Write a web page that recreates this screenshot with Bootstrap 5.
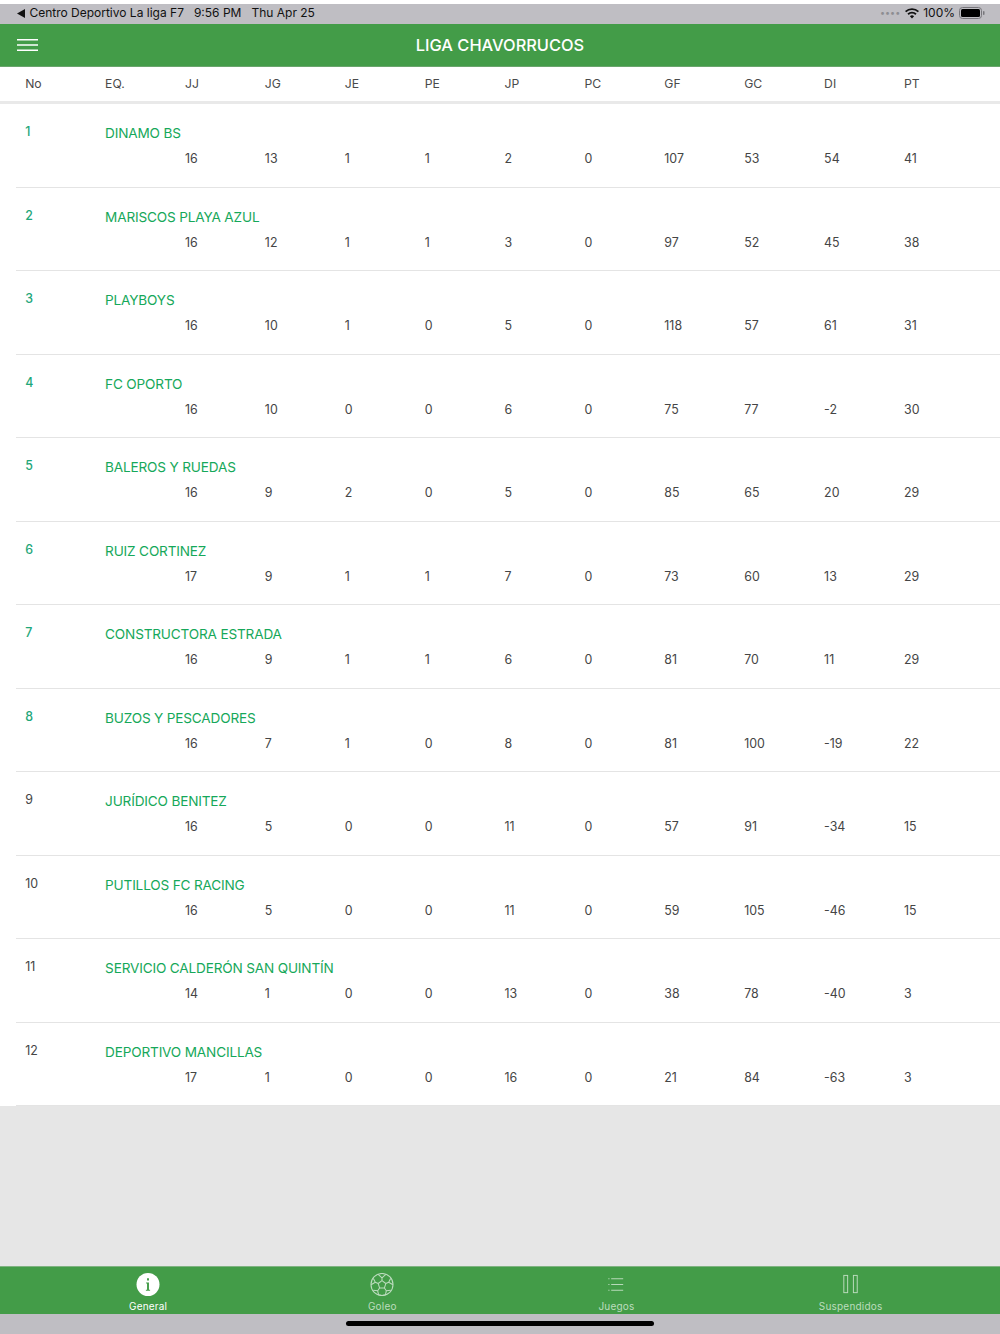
<!DOCTYPE html>
<html lang="es">
<head>
<meta charset="utf-8">
<title>Liga Chavorrucos</title>
<link href="https://cdn.jsdelivr.net/npm/bootstrap@5.3.0/dist/css/bootstrap.min.css" rel="stylesheet">
<style>
html,body{height:1334px;overflow:hidden}
body{font-family:Inter,"Liberation Sans",sans-serif;background:#e6e6e6;color:#444}
.shell{height:1334px}
.statusbar{height:24px;padding:0 15px 2px 17px;background:#bfbec3;color:#111;font-size:12px;line-height:16px;border-top:4px solid #fff;box-sizing:border-box}
.statusbar .gap-s{gap:10px}
.sig{color:#8d8d92;font-size:9px;margin-right:5px}
.appbar{height:43px;background:#439c48;color:#fff;font-size:16.4px;font-weight:500;border-bottom:1px solid #6aa56d}
.burger{position:absolute;left:17px;top:15px;width:21px;height:12px}
.headrow{height:37px;background:#fff;border-bottom:3px solid #e9e9e9;padding-left:25.2px;font-size:12.2px;color:#4a4a4a}
.cols{display:grid;grid-template-columns:repeat(12,79.9px)}
.listing{background:#fff}
.entry{height:83.5px;margin-left:16px;padding:20px 0 0 9.2px;border-bottom:1px solid #e4e4e4;font-size:12.4px;color:#454545;grid-template-rows:18px 18px;row-gap:8.4px;line-height:18px;box-sizing:border-box}
.rank{margin-top:-1px}
.rank.top{color:#1fa77a;font-weight:500}
.teamname{grid-column:2/13;color:#16a85a;font-size:13.6px;letter-spacing:-.17px}
.gapcell{grid-column:1/3}
.filler{flex:1;background:#e6e6e6}
.tabs{height:48px;background:#439c48;border-top:1px solid #7fb381;color:#bcdcbe;font-size:10px;letter-spacing:.2px}
.tabitem{width:234.2px;height:47px}
.tabitem svg{display:block;margin-top:6px;margin-bottom:3px}
.tabitem.active{color:#fff}
.tabstrip{padding-left:31px}
.homebar{height:20px;background:#bfbec3}
.homeind{width:308px;height:5px;border-radius:3px;background:#000;margin-top:7px}
</style>
</head>
<body>
<div class="shell d-flex flex-column">
  <div class="statusbar d-flex justify-content-between align-items-center">
    <div class="d-flex align-items-center gap-s">
      <span><svg width="9" height="9" viewBox="0 0 9 9"><path d="M0 4.5 8 0v9z" fill="#111"/></svg> Centro Deportivo La liga F7</span>
      <span>9:56 PM</span>
      <span>Thu Apr 25</span>
    </div>
    <div class="d-flex align-items-center">
      <span class="sig">••••</span>
      <svg class="me-1" width="14" height="11" viewBox="0 0 14 11"><path d="M7 10.5 4.9 8.2a3 3 0 0 1 4.2 0zM3.7 6.9 2.4 5.5a6.6 6.6 0 0 1 9.2 0l-1.3 1.4a4.7 4.7 0 0 0-6.6 0zM1.2 4.3 0 3a10 10 0 0 1 14 0l-1.2 1.3a8.3 8.3 0 0 0-11.6 0z" fill="#111"/></svg>
      <span class="me-1">100%</span>
      <svg width="26" height="12" viewBox="0 0 26 12"><rect x=".5" y=".5" width="22" height="11" rx="3" fill="none" stroke="#77767b"/><rect x="2" y="2" width="19" height="8" rx="1.5" fill="#000"/><rect x="24" y="4" width="1.5" height="4" rx=".7" fill="#77767b"/></svg>
    </div>
  </div>
  <div class="appbar position-relative d-flex align-items-center justify-content-center">
    <svg class="burger" viewBox="0 0 21 12"><path d="M0 .75h21M0 6h21M0 11.25h21" stroke="#fff" stroke-width="1.4"/></svg>
    <span>LIGA CHAVORRUCOS</span>
  </div>
  <div class="headrow cols align-items-center">
    <span>No</span><span>EQ.</span><span>JJ</span><span>JG</span><span>JE</span><span>PE</span><span>JP</span><span>PC</span><span>GF</span><span>GC</span><span>DI</span><span>PT</span>
  </div>
  <div class="listing">
    <div class="entry cols"><span class="rank top">1</span><span class="teamname">DINAMO BS</span><span class="gapcell"></span><span>16</span><span>13</span><span>1</span><span>1</span><span>2</span><span>0</span><span>107</span><span>53</span><span>54</span><span>41</span></div>
    <div class="entry cols"><span class="rank top">2</span><span class="teamname">MARISCOS PLAYA AZUL</span><span class="gapcell"></span><span>16</span><span>12</span><span>1</span><span>1</span><span>3</span><span>0</span><span>97</span><span>52</span><span>45</span><span>38</span></div>
    <div class="entry cols"><span class="rank top">3</span><span class="teamname">PLAYBOYS</span><span class="gapcell"></span><span>16</span><span>10</span><span>1</span><span>0</span><span>5</span><span>0</span><span>118</span><span>57</span><span>61</span><span>31</span></div>
    <div class="entry cols"><span class="rank top">4</span><span class="teamname">FC OPORTO</span><span class="gapcell"></span><span>16</span><span>10</span><span>0</span><span>0</span><span>6</span><span>0</span><span>75</span><span>77</span><span>-2</span><span>30</span></div>
    <div class="entry cols"><span class="rank top">5</span><span class="teamname">BALEROS Y RUEDAS</span><span class="gapcell"></span><span>16</span><span>9</span><span>2</span><span>0</span><span>5</span><span>0</span><span>85</span><span>65</span><span>20</span><span>29</span></div>
    <div class="entry cols"><span class="rank top">6</span><span class="teamname">RUIZ CORTINEZ</span><span class="gapcell"></span><span>17</span><span>9</span><span>1</span><span>1</span><span>7</span><span>0</span><span>73</span><span>60</span><span>13</span><span>29</span></div>
    <div class="entry cols"><span class="rank top">7</span><span class="teamname">CONSTRUCTORA ESTRADA</span><span class="gapcell"></span><span>16</span><span>9</span><span>1</span><span>1</span><span>6</span><span>0</span><span>81</span><span>70</span><span>11</span><span>29</span></div>
    <div class="entry cols"><span class="rank top">8</span><span class="teamname">BUZOS Y PESCADORES</span><span class="gapcell"></span><span>16</span><span>7</span><span>1</span><span>0</span><span>8</span><span>0</span><span>81</span><span>100</span><span>-19</span><span>22</span></div>
    <div class="entry cols"><span class="rank">9</span><span class="teamname">JURÍDICO BENITEZ</span><span class="gapcell"></span><span>16</span><span>5</span><span>0</span><span>0</span><span>11</span><span>0</span><span>57</span><span>91</span><span>-34</span><span>15</span></div>
    <div class="entry cols"><span class="rank">10</span><span class="teamname">PUTILLOS FC RACING</span><span class="gapcell"></span><span>16</span><span>5</span><span>0</span><span>0</span><span>11</span><span>0</span><span>59</span><span>105</span><span>-46</span><span>15</span></div>
    <div class="entry cols"><span class="rank">11</span><span class="teamname">SERVICIO CALDERÓN SAN QUINTÍN</span><span class="gapcell"></span><span>14</span><span>1</span><span>0</span><span>0</span><span>13</span><span>0</span><span>38</span><span>78</span><span>-40</span><span>3</span></div>
    <div class="entry cols"><span class="rank">12</span><span class="teamname">DEPORTIVO MANCILLAS</span><span class="gapcell"></span><span>17</span><span>1</span><span>0</span><span>0</span><span>16</span><span>0</span><span>21</span><span>84</span><span>-63</span><span>3</span></div>
  </div>
  <div class="filler"></div>
  <div class="tabs tabstrip d-flex">
    <div class="tabitem active d-flex flex-column align-items-center">
      <svg width="24" height="24" viewBox="0 0 24 24"><circle cx="12" cy="12" r="12" fill="#fff"/><path d="M11 5.5h2v2.2h-2zM10 10h3v7.5h1.2v1H9.8v-1H11V11h-1z" fill="#439c48"/></svg>
      <span>General</span>
    </div>
    <div class="tabitem d-flex flex-column align-items-center">
      <svg width="24" height="24" viewBox="0 0 24 24" fill="none" stroke="#bcdcbe" stroke-width="1.1"><circle cx="12" cy="12" r="11.5"/><path d="M12 8l4 3-1.5 4.6h-5L8 11zM12 8V5M16 11l3-1.3M14.5 15.6l2 3M9.5 15.6l-2 3M8 11 5 9.7M12 5 8 1.4M12 5l4-3.6M19 9.7l2-4M19 9.7l4.4 2.6M16.5 18.6l4.6-.6M16.5 18.6 15.5 23M7.5 18.6 2.9 18M7.5 18.6 8.5 23M5 9.7l-2-4M5 9.7.6 12.3M8.5 23c2.3.6 4.7.6 7 0"/></svg>
      <span>Goleo</span>
    </div>
    <div class="tabitem d-flex flex-column align-items-center">
      <svg width="24" height="24" viewBox="0 0 24 24" fill="none" stroke="#bcdcbe" stroke-width="1"><path d="M7 6h12.5M7 12h12.5M7 18h12.5M4 6h1.2M4 12h1.2M4 18h1.2"/></svg>
      <span>Juegos</span>
    </div>
    <div class="tabitem d-flex flex-column align-items-center">
      <svg width="24" height="24" viewBox="0 0 24 24" fill="none" stroke="#bcdcbe" stroke-width="1"><rect x="4.5" y="2.5" width="4" height="18"/><rect x="14.5" y="2.5" width="4" height="18"/></svg>
      <span>Suspendidos</span>
    </div>
  </div>
  <div class="homebar d-flex justify-content-center"><div class="homeind"></div></div>
</div>
<script src="https://cdn.jsdelivr.net/npm/bootstrap@5.3.0/dist/js/bootstrap.bundle.min.js"></script>
</body>
</html>
